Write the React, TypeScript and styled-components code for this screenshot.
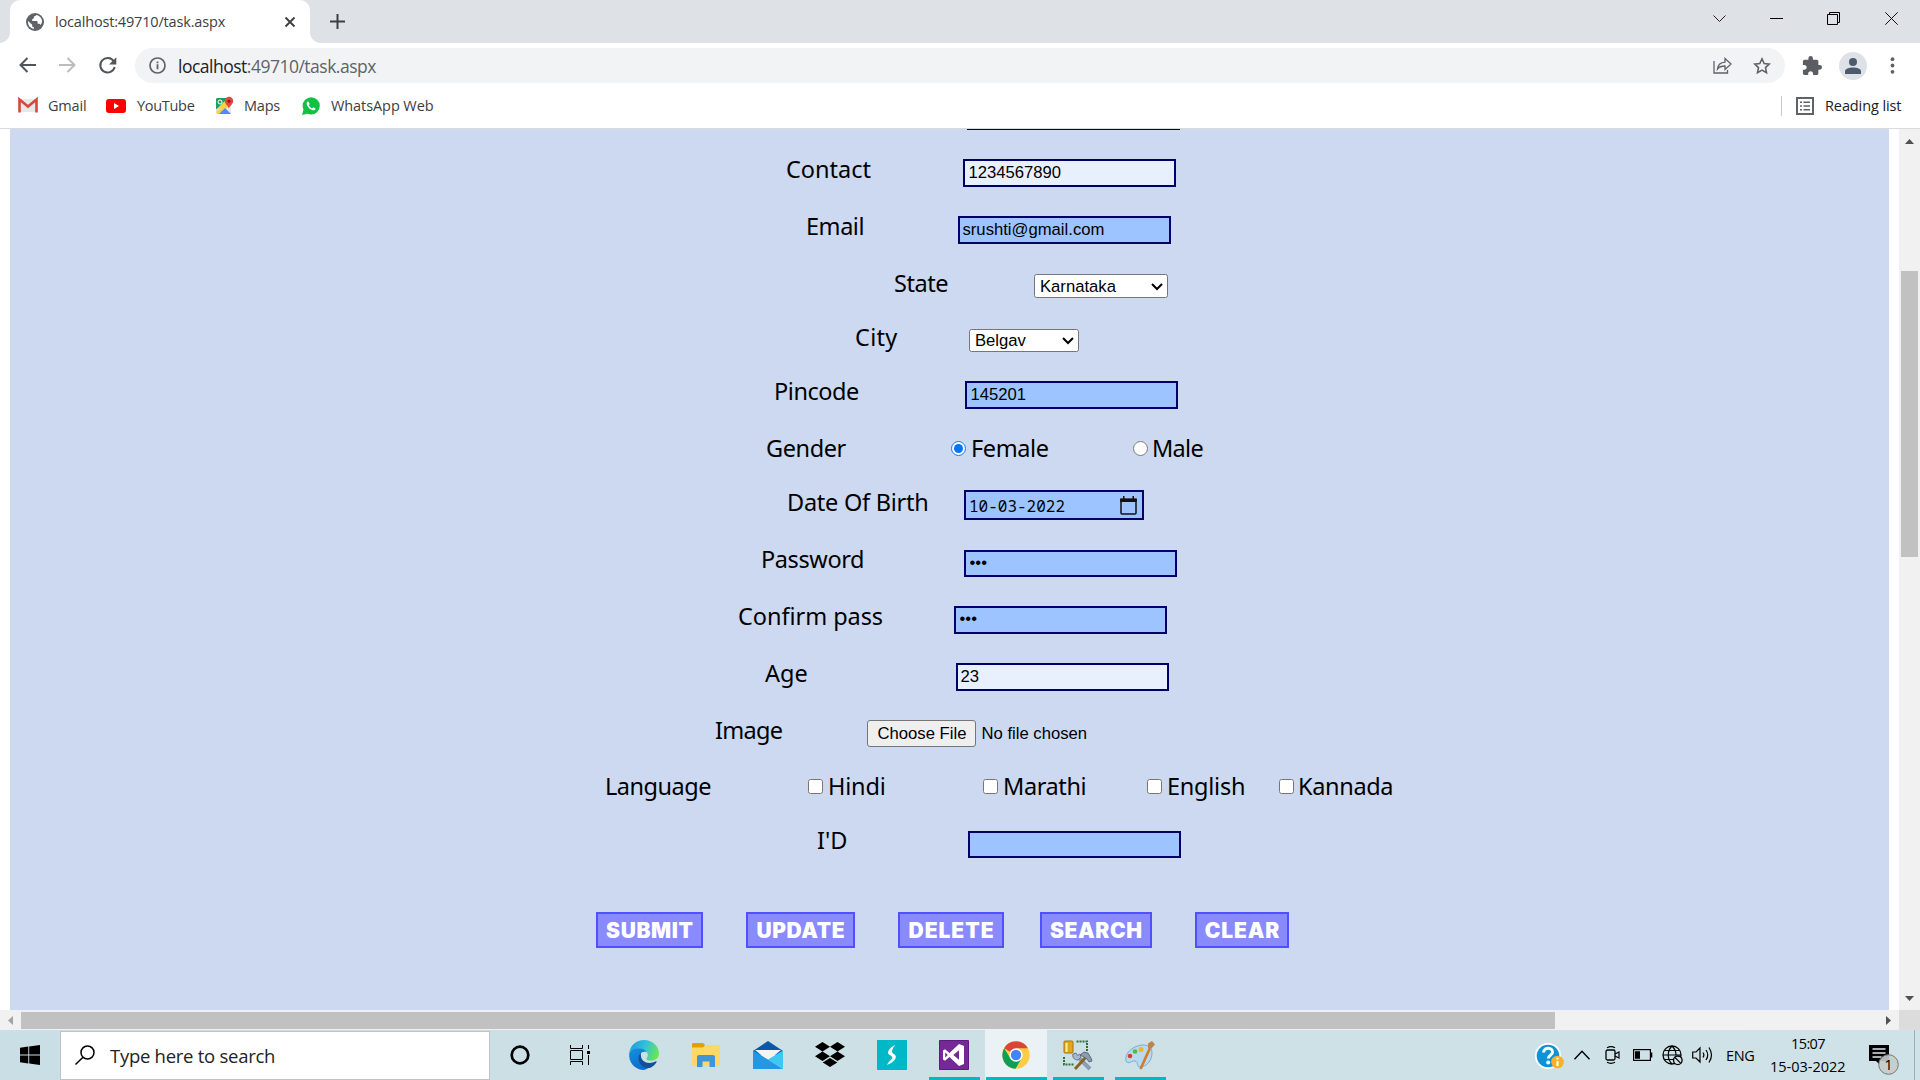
import React from 'react';
import styled, { createGlobalStyle } from 'styled-components';

const ui = `"Open Sans", "Noto Sans", sans-serif`;
const formFont = `"Noto Sans", "Open Sans", sans-serif`;
const control = `"Liberation Sans", Arial, sans-serif`;
const mono = `"Noto Sans Mono", "Liberation Mono", monospace`;

const Global = createGlobalStyle`
  *, *::before, *::after { box-sizing: border-box; }
  html, body { margin: 0; padding: 0; overflow: hidden; background: #fff; }
  button, input, select { margin: 0; }
`;

const Screen = styled.div`
  width: 1920px;
  height: 1080px;
  display: flex;
  flex-direction: column;
  overflow: hidden;
  font-family: ${ui};
`;

type TextProps = { w: number; ls?: number; ml?: number; size?: number; color?: string };
const Text = styled.span<TextProps>`
  flex: none;
  width: ${p => p.w}px;
  margin-left: ${p => p.ml ?? 0}px;
  letter-spacing: ${p => p.ls ?? 0}px;
  font-size: ${p => p.size ?? 14.5}px;
  color: ${p => p.color ?? '#3c4043'};
  white-space: nowrap;
`;
const Host = styled.span`color: #202124;`;

const Icon = styled.svg<{ ml?: number; mr?: number; mt?: number }>`
  flex: none;
  display: block;
  overflow: visible;
  margin: ${p => p.mt ?? 0}px ${p => p.mr ?? 0}px 0 ${p => p.ml ?? 0}px;
`;

const TabStrip = styled.header`
  flex: none;
  height: 43px;
  display: flex;
  align-items: center;
  background: #dee1e6;
`;
const Tab = styled.div`
  position: relative;
  width: 300px;
  height: 43px;
  margin-left: 10px;
  padding-left: 16px;
  display: flex;
  align-items: center;
  background: #fff;
  border-radius: 10px 10px 0 0;
  &::before, &::after {
    content: '';
    position: absolute;
    bottom: 0;
    width: 10px;
    height: 10px;
  }
  &::before { left: -10px; background: radial-gradient(circle at 0 0, transparent 9.5px, #fff 10px); }
  &::after { right: -10px; background: radial-gradient(circle at 100% 0, transparent 9.5px, #fff 10px); }
`;
const Spacer = styled.div`flex: 1;`;

const Toolbar = styled.div`
  flex: none;
  height: 45px;
  display: flex;
  align-items: center;
  background: #fff;
`;
const Omnibox = styled.div`
  width: 1650px;
  height: 35px;
  margin-left: 18px;
  display: flex;
  align-items: center;
  border-radius: 18px;
  background: #f1f3f4;
`;
const Avatar = styled.div`
  width: 28px;
  height: 28px;
  margin-left: 17px;
  border-radius: 50%;
  background: #dee1e6;
  display: flex;
  align-items: center;
  justify-content: center;
`;
const Bookmarks = styled.nav`
  flex: none;
  height: 41px;
  padding-bottom: 5px;
  display: flex;
  align-items: center;
  background: #fff;
  border-bottom: 1px solid #d8dade;
`;
const Divider = styled.i`
  width: 1px;
  height: 20px;
  background: #c6c9cc;
`;

const Body = styled.div`
  flex: none;
  height: 881px;
  display: flex;
`;
const Viewport = styled.main`
  width: 1899px;
  height: 881px;
  padding: 0 10px;
  background: #fff;
`;
const Panel = styled.form`
  height: 881px;
  background: #cdd9f1;
  overflow: hidden;
`;
const Remnant = styled.div`
  width: 213px;
  height: 20px;
  margin-left: 957px;
  border-top: 1px solid #00006b;
`;
const Row = styled.div<{ h: number; start: number }>`
  height: ${p => p.h}px;
  padding-left: ${p => p.start - 10}px;
  display: flex;
  align-items: flex-start;
  font-family: ${formFont};
  line-height: 40px;
`;
const Label = styled(Text).attrs({ as: 'label' })`
  font-size: 23.5px;
  color: #000;
`;
const Field = styled.input<{ gap: number; top?: number; h?: number; filled?: boolean; inset?: number }>`
  width: 213px;
  height: ${p => p.h ?? 28}px;
  margin: ${p => p.top ?? 10}px 0 0 ${p => p.gap}px;
  padding: 1px 2px 1px ${p => p.inset ?? 3.5}px;
  border: 2px solid #00006b;
  border-radius: 0;
  background: ${p => (p.filled ? '#e8f0fe' : '#9dc4ff')};
  font: 16.67px/20px ${control};
  color: #000;
  outline: 0;
  &[type='password'] { padding-bottom: 3px; }
`;
const Select = styled.select<{ gap: number; top: number; w: number; h: number }>`
  zoom: 1.25;
  width: ${p => p.w / 1.25}px;
  height: ${p => p.h / 1.25}px;
  margin: ${p => p.top / 1.25}px 0 0 ${p => p.gap / 1.25}px;
  padding: 0;
  border: 1px solid #767676;
  border-radius: 2px;
  background-color: #fff;
  color: #000;
  font: 13.333px ${control};
`;
const Check = styled.input<{ gap: number }>`
  width: 15px;
  height: 15px;
  margin: 13px 0 0 ${p => p.gap}px;
`;
const DateBox = styled.div`
  width: 180px;
  height: 30px;
  margin: 8px 0 0 36px;
  padding: 0 5px 0 3px;
  display: flex;
  align-items: center;
  justify-content: space-between;
  border: 2px solid #00006b;
  background: #9dc4ff;
  line-height: 26px;
`;
const DateText = styled(Text)`
  font-family: ${mono};
  padding-top: 1px;
`;
const FileInput = styled.input`
  width: 300px;
  height: 27px;
  margin: 10px 0 0 85px;
  font: 16.67px ${control};
  color: #000;
  &::file-selector-button {
    width: 109px;
    height: 27px;
    margin: 0 5.5px 0 0;
    padding: 0 0 0 1px;
    border: 1px solid #767676;
    border-radius: 3px;
    background: #efefef;
    color: #000;
    font: 16.67px ${control};
  }
`;
const Actions = styled.div`
  display: flex;
  padding: 35px 0 0 586px;
`;
const Action = styled.button<{ w: number; gap?: number; ls: number }>`
  flex: none;
  width: ${p => p.w}px;
  height: 36px;
  margin-left: ${p => p.gap ?? 0}px;
  padding: 1px 0 0 ${p => p.ls}px;
  border: 2px solid #5050ff;
  background: #8a8aff;
  color: #fff;
  font: 900 21px/31px Inter, ${control};
  letter-spacing: ${p => p.ls}px;
  white-space: nowrap;
`;

const VScroll = styled.div`
  width: 21px;
  height: 881px;
  padding: 10px 0 9px;
  display: flex;
  flex-direction: column;
  align-items: center;
  background: #f1f1f1;
`;
const VThumb = styled.div`
  width: 17px;
  height: 286px;
  margin: 127px 0 auto;
  background: #c1c1c1;
`;
const HScroll = styled.div`
  flex: none;
  height: 20px;
  display: flex;
  align-items: center;
  background: #f1f1f1;
`;
const HThumb = styled.div`
  width: 1534px;
  height: 17px;
  margin-left: 8px;
  background: #c1c1c1;
`;
const Corner = styled.div`
  width: 21px;
  height: 20px;
  margin-left: 8px;
  background: #dcdcdc;
`;

const Taskbar = styled.footer`
  flex: none;
  height: 50px;
  display: flex;
  align-items: center;
  background: linear-gradient(90deg, #c9dfe5, #cde0e5 50%, #cfe2e8);
`;
const Start = styled.div`
  width: 60px;
  height: 50px;
  display: flex;
  align-items: center;
  justify-content: center;
`;
const SearchBox = styled.div`
  width: 430px;
  height: 49px;
  display: flex;
  align-items: center;
  border: 1px solid #bfc3c6;
  background: #fff;
`;
const TaskItem = styled.div<{ w?: number; running?: number; active?: boolean }>`
  width: ${p => p.w ?? 62}px;
  height: 50px;
  display: flex;
  align-items: center;
  justify-content: center;
  background:
    linear-gradient(#00b7c6, #00b7c6) bottom center / ${p => p.running ?? 0}px 3px no-repeat,
    ${p => (p.active ? '#eaf2f5' : 'transparent')};
`;
const Clock = styled.div`
  width: 80px;
  margin-left: 13px;
  display: flex;
  flex-direction: column;
  align-items: center;
  line-height: 23px;
`;
const Edge = styled.i`
  width: 1px;
  height: 50px;
  margin: 0 5px 0 15px;
  background: #9fb0b5;
`;

const Arrow = ({ d, fill = '#505050', w = 9, h = 5, ml }: { d: string; fill?: string; w?: number; h?: number; ml?: number }) => (
  <Icon width={w} height={h} ml={ml}><path d={d} fill={fill} /></Icon>
);

function ChromeTop() {
  return (
    <>
      <TabStrip>
        <Tab>
          <Icon width="18" height="18" viewBox="0 0 18 18">
            <circle cx="9" cy="9" r="9" fill="#5f6368" />
            <path d="M10.200 1.900c-.4 1-1.200 1.300-2.300 1.500v1.900l-1.700.9v1.700h4.200c.8 0 1.200.5 1.200 1.200v1.700h1.200c.9 0 1.400.5 1.700 1.200 1-1.300 1.600-2.600 1.500-4.300-.1-2.600-2.300-5.200-5.800-5.800z" fill="#fff" />
            <path d="M2 8.100l4.200 3.700v.9c0 .9.700 1.600 1.700 1.600v1.700C4.300 15.600 1.600 12.300 2 8.100z" fill="#fff" />
          </Icon>
          <Text w={170} ml={11} ls={-0.17}>localhost:49710/task.aspx</Text>
          <Icon ml={60} width="10" height="10" viewBox="0 0 10 10"><path d="M.5.500l9 9M9.500.500l-9 9" stroke="#3c4043" strokeWidth="1.900" fill="none" /></Icon>
        </Tab>
        <Icon ml={20} width="15" height="15" viewBox="0 0 15 15"><path d="M7.500 0v15M0 7.500h15" stroke="#3c4043" strokeWidth="2" /></Icon>
        <Spacer />
        <Icon width="13" height="7" viewBox="0 0 13 7" mt={-6}><path d="M.5.500l6 6 6-6" stroke="#222" strokeWidth="1" fill="none" /></Icon>
        <Icon ml={44} width="13" height="1" mt={-6}><path d="M0 0h13v1H0z" fill="#000" /></Icon>
        <Icon ml={44} width="13" height="13" viewBox="0 0 13 13" mt={-6}><path d="M.5 2.500h10v10H.5zM2.500 2V.500h10v10H11" stroke="#000" fill="none" /></Icon>
        <Icon ml={45} mr={22} width="13" height="13" viewBox="0 0 13 13" mt={-6}><path d="M.3.300l12.400 12.400M12.700.300L.3 12.700" stroke="#111" fill="none" /></Icon>
      </TabStrip>
      <Toolbar>
        <Icon ml={19} mt={-1} width="17" height="16" viewBox="0 0 17 16"><path d="M17 8H1.500M8.500 1L1.500 8l7 7" stroke="#50555a" strokeWidth="2" fill="none" /></Icon>
        <Icon ml={23} mt={-1} width="17" height="16" viewBox="0 0 17 16"><path d="M0 8h15.500M8.500 1l7 7-7 7" stroke="#babcbe" strokeWidth="2" fill="none" /></Icon>
        <Icon ml={23} mt={-1} width="18" height="17" viewBox="0 0 18 17"><path d="M14.700 4.200A7.300 7.300 0 1 0 15.700 10" stroke="#50555a" strokeWidth="2" fill="none" /><path d="M17.300.300v7.200h-7.200z" fill="#50555a" /></Icon>
        <Omnibox>
          <Icon ml={14} width="17" height="17" viewBox="0 0 17 17"><circle cx="8.500" cy="8.500" r="7.500" stroke="#5f6368" strokeWidth="1.700" fill="none" /><path d="M8.500 7.300v5M8.500 4.400v1.800" stroke="#5f6368" strokeWidth="1.800" /></Icon>
          <Text w={198} ml={12} size={17.5} ls={-0.5} color="#5f6368"><Host>localhost</Host>:49710/task.aspx</Text>
          <Spacer />
          <Icon width="19" height="17" viewBox="0 0 19 17"><path d="M1 4v12h13.500v-3M4.500 12c.5-4 3-6.500 7.500-6.800V1.500L18 7l-6 5.500V9c-3.500 0-5.800.8-7.500 3z" stroke="#5f6368" strokeWidth="1.300" fill="none" /></Icon>
          <Icon ml={21} mr={14} width="18" height="17" viewBox="0 0 18 17"><path d="M9 1.800l2.200 4.700 5 .6-3.700 3.500 1 5L9 13.100l-4.500 2.500 1-5L1.800 7.100l5-.6z" stroke="#5f6368" strokeWidth="1.600" fill="none" /></Icon>
        </Omnibox>
        <Icon ml={17} width="20" height="20" viewBox="1 1 22 22"><path d="M20.500 11H19V7c0-1.100-.9-2-2-2h-4V3.500a2.500 2.500 0 0 0-5 0V5H4c-1.100 0-2 .9-2 2v3.800h1.500c1.500 0 2.700 1.200 2.700 2.700S5 16.200 3.500 16.200H2V20c0 1.100.9 2 2 2h3.800v-1.500c0-1.500 1.200-2.700 2.700-2.700s2.700 1.200 2.700 2.700V22H17c1.100 0 2-.9 2-2v-4h1.500a2.500 2.500 0 0 0 0-5z" fill="#5a5e63" /></Icon>
        <Avatar><Icon width="16" height="16" viewBox="0 0 16 16"><circle cx="8" cy="4" r="4" fill="#4c5a6e" /><path d="M0 16v-2.500c0-3 4-4 8-4s8 1 8 4V16z" fill="#4c5a6e" /></Icon></Avatar>
        <Icon ml={23} width="4" height="17"><circle cx="2.500" cy="2.200" r="1.900" fill="#5f6368" /><circle cx="2.500" cy="8.500" r="1.900" fill="#5f6368" /><circle cx="2.500" cy="14.800" r="1.900" fill="#5f6368" /></Icon>
      </Toolbar>
      <Bookmarks>
        <Icon ml={18} width="20" height="15" viewBox="0 0 20 15"><path d="M1 1h18v13H1z" fill="#e8e8e8" /><path d="M1.500 14.500V1.500L10 8.500l8.500-7v13" stroke="#d5493d" strokeWidth="2.600" fill="none" /></Icon>
        <Text w={38} ml={10} ls={-0.2}>Gmail</Text>
        <Icon ml={20} width="20" height="14" viewBox="0 0 20 14"><rect width="20" height="14" rx="3" fill="#f00" /><path d="M8 4v6l5-3z" fill="#fff" /></Icon>
        <Text w={57} ml={11} ls={-0.3}>YouTube</Text>
        <Icon ml={21} width="19" height="18" viewBox="0 0 19 18"><path d="M1 1h15v16H1z" fill="#e9e9e9" /><path d="M2 1h11L1 13V2z" fill="#1da160" /><path d="M1 13L13 1.500 16 4v3L5 17H2z" fill="#ffcf3f" /><path d="M4 17l6-6 6 6z" fill="#4a8df6" /><path d="M7 11l-6 4v-3z" fill="#ddd" /><circle cx="5" cy="5" r="2" stroke="#fff" fill="none" /><path d="M13.800 12c0-3-4-4.500-4-8a4.200 4.200 0 0 1 8.400 0c0 3.500-4 5-4.400 8z" fill="#dc4a3d" /><circle cx="14" cy="4.200" r="1.500" fill="#7c1f18" /></Icon>
        <Text w={36} ml={10} ls={-0.2}>Maps</Text>
        <Icon ml={22} width="18" height="18" viewBox="0 0 18 18"><circle cx="9.200" cy="8.800" r="8.600" fill="#12c143" /><path d="M0 18l1.500-5.500 4 4.200z" fill="#12c143" /><path d="M6 4.200c-1.300.7-1.700 2-1 3.800 1 2.500 2.900 4.300 5.200 5.100 1.700.6 3 .1 3.500-1.400l-2.400-1.500-1.300 1.200C8.500 10.700 7.400 9.500 6.800 8.100l1-1.200z" fill="#fff" /></Icon>
        <Text w={103} ml={11} ls={-0.08}>WhatsApp Web</Text>
        <Spacer />
        <Divider />
        <Icon ml={14} width="18" height="18" viewBox="0 0 18 18"><rect x="1" y="1" width="16" height="16" stroke="#5f6368" strokeWidth="2" fill="none" /><path d="M4 5.200h2M7.500 5.200H14M4 9h2M7.500 9H14M4 12.800h2M7.500 12.800H14" stroke="#5f6368" strokeWidth="1.600" /></Icon>
        <Text w={95} ml={11} ls={-0.1} color="#202124">Reading list</Text>
      </Bookmarks>
    </>
  );
}

function TaskForm() {
  return (
    <Panel>
      <Remnant />
      <Row h={57} start={786}><Label w={85}>Contact</Label><Field gap={92} filled defaultValue="1234567890" /></Row>
      <Row h={57} start={806}><Label w={58} ls={-0.45}>Email</Label><Field gap={94} inset={2.5} defaultValue="srushti@gmail.com" /></Row>
      <Row h={54} start={894}><Label w={54} ls={-0.45}>State</Label><Select gap={86} top={11} w={134} h={24}><option>Karnataka</option></Select></Row>
      <Row h={54} start={855}><Label w={43} ls={0.3}>City</Label><Select gap={71} top={12} w={110} h={23}><option>Belgav</option></Select></Row>
      <Row h={57} start={774}><Label w={86} ls={-0.45}>Pincode</Label><Field gap={105} defaultValue="145201" /></Row>
      <Row h={54} start={766}>
        <Label w={80} ls={-0.4}>Gender</Label>
        <Check type="radio" name="gender" gap={105} defaultChecked /><Label w={77} ml={5} ls={-0.4}>Female</Label>
        <Check type="radio" name="gender" gap={85} /><Label w={51} ml={4} ls={-0.7}>Male</Label>
      </Row>
      <Row h={57} start={787}>
        <Label w={141} ls={-0.25}>Date Of Birth</Label>
        <DateBox>
          <DateText w={98} size={16} color="#000">10-03-2022</DateText>
          <Icon width="17" height="19" viewBox="0 0 17 19"><path d="M1 3.500h15v13.500a1 1 0 0 1-1 1H2a1 1 0 0 1-1-1z" stroke="#111" strokeWidth="1.500" fill="none" /><path d="M.200 2.500h16.600V6H.2zM3 0h1.500v3H3zM12.500 0H14v3h-1.500z" fill="#111" /></Icon>
        </DateBox>
      </Row>
      <Row h={57} start={761}><Label w={103} ls={-0.4}>Password</Label><Field gap={100} top={11} h={27} type="password" defaultValue="abc" /></Row>
      <Row h={57} start={738}><Label w={145} ls={-0.05}>Confirm pass</Label><Field gap={71} type="password" defaultValue="abc" /></Row>
      <Row h={57} start={765}><Label w={42}>Age</Label><Field gap={149} filled inset={2.5} defaultValue="23" /></Row>
      <Row h={56} start={715}><Label w={67} ls={-0.7}>Image</Label><FileInput type="file" /></Row>
      <Row h={54} start={605}>
        <Label w={106} ls={-0.5}>Language</Label>
        <Check type="checkbox" gap={97} /><Label w={57} ml={5} ls={-0.2}>Hindi</Label>
        <Check type="checkbox" gap={98} /><Label w={83} ml={5} ls={-0.4}>Marathi</Label>
        <Check type="checkbox" gap={61} /><Label w={78} ml={5} ls={-0.25}>English</Label>
        <Check type="checkbox" gap={34} /><Label w={95} ml={4} ls={-0.35}>Kannada</Label>
      </Row>
      <Row h={57} start={817}><Label w={31}>I'D</Label><Field gap={120} top={11} h={27} /></Row>
      <Actions>
        <Action type="button" w={107} ls={0.6}>SUBMIT</Action>
        <Action type="button" w={109} gap={43} ls={0.6}>UPDATE</Action>
        <Action type="button" w={106} gap={43} ls={1}>DELETE</Action>
        <Action type="button" w={112} gap={36} ls={0.6}>SEARCH</Action>
        <Action type="button" w={94} gap={43} ls={0.8}>CLEAR</Action>
      </Actions>
    </Panel>
  );
}

function TaskIcons() {
  return (
    <>
      <TaskItem w={60}><Icon width="20" height="20"><circle cx="10" cy="10" r="8.300" stroke="#000" strokeWidth="2.700" fill="none" /></Icon></TaskItem>
      <TaskItem w={63}><Icon mr={3} width="20" height="20" viewBox="0 0 20 20"><path d="M.5 0v3.500h12V0M.5 5.500h12v9H.5zM.5 20v-3.500h12V20M18.500 0v4M18.500 10v10" stroke="#000" fill="none" /><path d="M17 6h3v3h-3z" /></Icon></TaskItem>
      <TaskItem>
        <Icon width="30" height="30" viewBox="0 0 30 30">
          <defs>
            <linearGradient id="edgeSwell" x1="0" y1="0.300" x2="1" y2="0.600"><stop offset="0" stopColor="#1a9de0" /><stop offset=".5" stopColor="#35c1d8" /><stop offset="1" stopColor="#6ae84e" /></linearGradient>
            <linearGradient id="edgeBody" x1="0" y1="0" x2="0.500" y2="1"><stop offset="0" stopColor="#1690e0" /><stop offset="1" stopColor="#0a6fcb" /></linearGradient>
          </defs>
          <path d="M.3 13C1.500 5 7.500 0 15 0c9 0 15 6.500 15 13.500 0 4.500-3.500 7.200-8 7.200-3 0-4.500-1-4.500-2 0-.8 1.300-1.500 1.300-3.700C18.800 11.500 14.500 8.500 10 8.500 5 8.500 1.500 11 .3 13z" fill="url(#edgeSwell)" />
          <path d="M.2 13C2 10 5.500 8.300 9.500 8.300c4 0 6.800 1.700 8.300 3.700-5-1.500-7.800 2-7.300 6 .6 5.500 5 9 9.500 9.500-2 1.500-4 2.400-6 2.400C5.500 29.500-.8 22 .2 13z" fill="url(#edgeBody)" />
          <path d="M11.800 12.800c-3 3-3 7.700-.3 11.200 2.700 3.500 6.500 4.500 9.500 4 3-1.300 5.300-3.500 6.600-6 .3-.6-.3-1-.8-.7-5 2.800-11.500 2-14-2.300-1-2-.9-4.500-1-6.200z" fill="#12509c" />
        </Icon>
      </TaskItem>
      <TaskItem>
        <Icon mt={-1} width="28" height="24" viewBox="0 0 28 24"><path d="M0 1.500C0 .7.700 0 1.500 0H11l2 2-1.500 3H0z" fill="#e0a000" /><path d="M0 4.500h11L13.500 2H27c.6 0 1 .4 1 1v19c0 .6-.4 1-1 1H1c-.6 0-1-.4-1-1z" fill="#ffd766" /><path d="M5 24V14c0-1.200.8-2 2-2h14c1.200 0 2 .8 2 2v10h-5.500v-5.500h-7V24z" fill="#3d95da" /></Icon>
      </TaskItem>
      <TaskItem>
        <Icon width="30" height="28" viewBox="0 0 30 28"><path d="M0 10L15 0l15 10v4H0z" fill="#0a59a8" /><path d="M2 9h26L15 20z" fill="#f4f4f4" /><path d="M0 28V9.500l15 9 15 9.500z" fill="#2496e2" /><path d="M30 9.500L15 18.500 30 28z" fill="#3cc8f4" /></Icon>
      </TaskItem>
      <TaskItem>
        <Icon mt={-1} width="30" height="25" viewBox="0 0 30 25"><path d="M7.500 0L15 4.700 7.500 9.400 0 4.700zM22.500 0L30 4.700l-7.500 4.700L15 4.700zM7.500 9.600l7.500 4.700L7.500 19 0 14.300zM22.500 9.600l7.500 4.700-7.500 4.700-7.500-4.700zM15 16l7.300 4.500L15 25l-7.300-4.500z" /></Icon>
      </TaskItem>
      <TaskItem>
        <Icon width="30" height="30" viewBox="0 0 30 30"><path d="M0 0h30v30H0z" fill="#00b8c6" /><path d="M18 5c-4 2-7 5-7 8 0 1.800 4.600 2.800 4.300 4.700-.4 2-3.800 3.500-5.300 7.300 4-1.500 8.900-4.800 8.900-8.500 0-2-4.200-3-3.900-5.300.2-2.200 2-4 3-6.200z" fill="#fff" /></Icon>
      </TaskItem>
      <TaskItem running={51}>
        <Icon width="30" height="30" viewBox="0 0 30 30"><path d="M.5.500h29v29H.5z" fill="#742a94" stroke="#5c1a80" /><path d="M20 4l5 2v18l-5 2-9.500-9-4.500 3.700-2-1.200V10.500l2-1.200 4.500 3.700zm0 6.300L14.300 15l5.700 4.700zM6.200 12.500v5L8.800 15z" fill="#fff" fillRule="evenodd" /></Icon>
      </TaskItem>
      <TaskItem running={61} active>
        <Icon width="28" height="28" viewBox="0 0 28 28"><circle cx="14" cy="14" r="13.700" fill="#fc4" /><path d="M14 14L2.100 7.200A13.700 13.700 0 0 1 25.900 7.200H14z" fill="#db4437" /><path d="M2.100 7.200A13.700 13.700 0 0 0 13.500 27.700L19.500 17.500 8.300 17z" fill="#0f9d58" /><circle cx="14" cy="14" r="6.700" fill="#fff" /><circle cx="14" cy="14" r="5.200" fill="#4285f4" /></Icon>
      </TaskItem>
      <TaskItem running={51}>
        <Icon width="30" height="30" viewBox="0 0 30 30"><rect x="1" y="1" width="9" height="12" rx="1" fill="#e0a818" stroke="#a87408" /><path d="M3.500 3v9" stroke="#fff0a0" strokeWidth="2" /><path d="M13.500 1.500H24v10M1 17v7.500h10" stroke="#2f7030" strokeWidth="2" strokeDasharray="2 1" fill="none" /><path d="M15 17l12 12" stroke="#8b9db4" strokeWidth="4" /><path d="M10 14l3-1 1.500 2.500L17 14l1 3-3 3c-4 0-6-3-5-6z" fill="#a7b8cd" stroke="#66778c" /><path d="M12 29l11-12" stroke="#8a6420" strokeWidth="3" /><path d="M17 15l4-3 4 1 3 5 1 3-3 1-2-3-3-2z" fill="#8c9cae" stroke="#4e5c6b" strokeWidth=".8" /></Icon>
      </TaskItem>
      <TaskItem running={51}>
        <Icon width="30" height="28" viewBox="0 0 30 28"><path d="M1 20C-1 13 7 5 17 4c6-.5 10 3 10 8 0 8-6 14-12 14-4 0-1-5-5-6-3-.7-7 4-9 0z" fill="#b6daf0" stroke="#7badd0" /><circle cx="5" cy="15" r="2.300" fill="#de3b2c" /><circle cx="10" cy="10.500" r="2.300" fill="#52b848" /><circle cx="16" cy="8.500" r="2.500" fill="#f4b71e" /><path d="M25 7L15.500 28" stroke="#d47a2c" strokeWidth="2.600" /><path d="M23 2.500L27 0l3 3.500L26 8l-3-1z" fill="#b98652" /></Icon>
      </TaskItem>
    </>
  );
}

function Tray() {
  return (
    <>
      <Icon mt={3} width="30" height="28" viewBox="0 0 30 28"><circle cx="13" cy="13" r="13" fill="#fff" /><circle cx="13" cy="13" r="11.300" fill="#0c93d6" /><path d="M8.500 9.500C9 3.500 18 4 17.500 9.300c-.3 2.700-4 3-4.200 6.200" stroke="#fff" strokeWidth="3" fill="none" /><circle cx="13.200" cy="19.500" r="2" fill="#fff" /><circle cx="22.500" cy="19" r="6.300" fill="#f7b02a" /><path d="M22.500 18v5M22.500 14.800v1.800" stroke="#fff" strokeWidth="2" /></Icon>
      <Icon ml={9} width="16" height="10" viewBox="0 0 16 10"><path d="M.5 9.200L8 1.200l7.500 8" stroke="#000" strokeWidth="1.400" fill="none" /></Icon>
      <Icon ml={15} width="16" height="18" viewBox="0 0 16 18"><rect x="1" y="4" width="9" height="10" rx="1.500" stroke="#000" strokeWidth="1.300" fill="none" /><path d="M10 8l4-2v6l-4-2M2 1.800Q6-.500 10 1.800M2 16.300q4 2 8 0" stroke="#000" strokeWidth="1.200" fill="none" /></Icon>
      <Icon ml={12} width="20" height="12" viewBox="0 0 20 12"><rect x=".6" y=".6" width="16.800" height="10.800" stroke="#000" strokeWidth="1.200" fill="none" /><path d="M2 2.300h5v7.500H2zM18 3.500h1.300v5H18z" /></Icon>
      <Icon ml={9} width="21" height="20" viewBox="0 0 21 20"><circle cx="10" cy="10" r="9" stroke="#000" strokeWidth="1.300" fill="none" /><path d="M1 10h18M2.500 5.500h15M2.500 14.500h9M10 1C5 6 5 14 10 19M10 1c3 3 4 6 4 9" stroke="#000" strokeWidth="1.200" fill="none" /><circle cx="15.800" cy="15.300" r="4.300" stroke="#000" strokeWidth="1.300" fill="#cfe2e8" /><path d="M13 12.500l5.600 5.600" stroke="#000" strokeWidth="1.200" /></Icon>
      <Icon ml={9} width="21" height="18" viewBox="0 0 21 18"><path d="M.7 6H4l4-4v14l-4-4H.7zM11 6.500q1.800 2.500 0 5M14 4q3.500 5 0 10M17 1.500q5 7.500 0 15" stroke="#000" strokeWidth="1.200" fill="none" /></Icon>
      <Text w={29} ml={13} ls={-0.4} color="#000">ENG</Text>
      <Clock>
        <Text w={34} ls={-0.6} color="#000">15:07</Text>
        <Text w={76} color="#000">15-03-2022</Text>
      </Clock>
      <Icon ml={21} mt={10} width="30" height="30" viewBox="0 0 30 30"><path d="M0 0h20v16h-9v4l-4-4H0z" fill="#000" /><path d="M3.500 4h13M3.500 8h13M3.500 12h9" stroke="#dce8ec" strokeWidth="1.300" /><circle cx="19.500" cy="19.500" r="9.800" fill="#c4cccd" fillOpacity=".9" stroke="#777" /><text x="19.500" y="25" textAnchor="middle" fontFamily="Open Sans" fontSize="15" fill="#000">1</text></Icon>
      <Edge />
    </>
  );
}

export default function App() {
  return (
    <Screen>
      <Global />
      <ChromeTop />
      <Body>
        <Viewport><TaskForm /></Viewport>
        <VScroll>
          <Arrow d="M0 5L4.500 0 9 5z" /><VThumb /><Arrow d="M0 0h9L4.500 5z" />
        </VScroll>
      </Body>
      <HScroll>
        <Arrow ml={8} w={5} h={9} d="M5 0v9L0 4.500z" fill="#a3a3a3" />
        <HThumb />
        <Spacer />
        <Arrow w={5} h={9} d="M0 0v9l5-4.500z" />
        <Corner />
      </HScroll>
      <Taskbar>
        <Start><Icon width="20" height="20" viewBox="0 0 20 20"><path d="M0 2.800L8.300 1.600v8H0zM9.200 1.500L20 0v9.600H9.200zM0 10.400h8.300v8L0 17.200zM9.200 10.400H20V20L9.200 18.500z" /></Icon></Start>
        <SearchBox>
          <Icon ml={13} width="22" height="20" viewBox="0 0 22 20"><circle cx="13.500" cy="7.500" r="6.500" stroke="#000" strokeWidth="1.500" fill="none" /><path d="M9 12.300L1.500 19.500" stroke="#000" strokeWidth="1.500" /></Icon>
          <Text w={165} ml={14} size={18.5} ls={-0.27} color="#222">Type here to search</Text>
        </SearchBox>
        <TaskIcons />
        <Spacer />
        <Tray />
      </Taskbar>
    </Screen>
  );
}
